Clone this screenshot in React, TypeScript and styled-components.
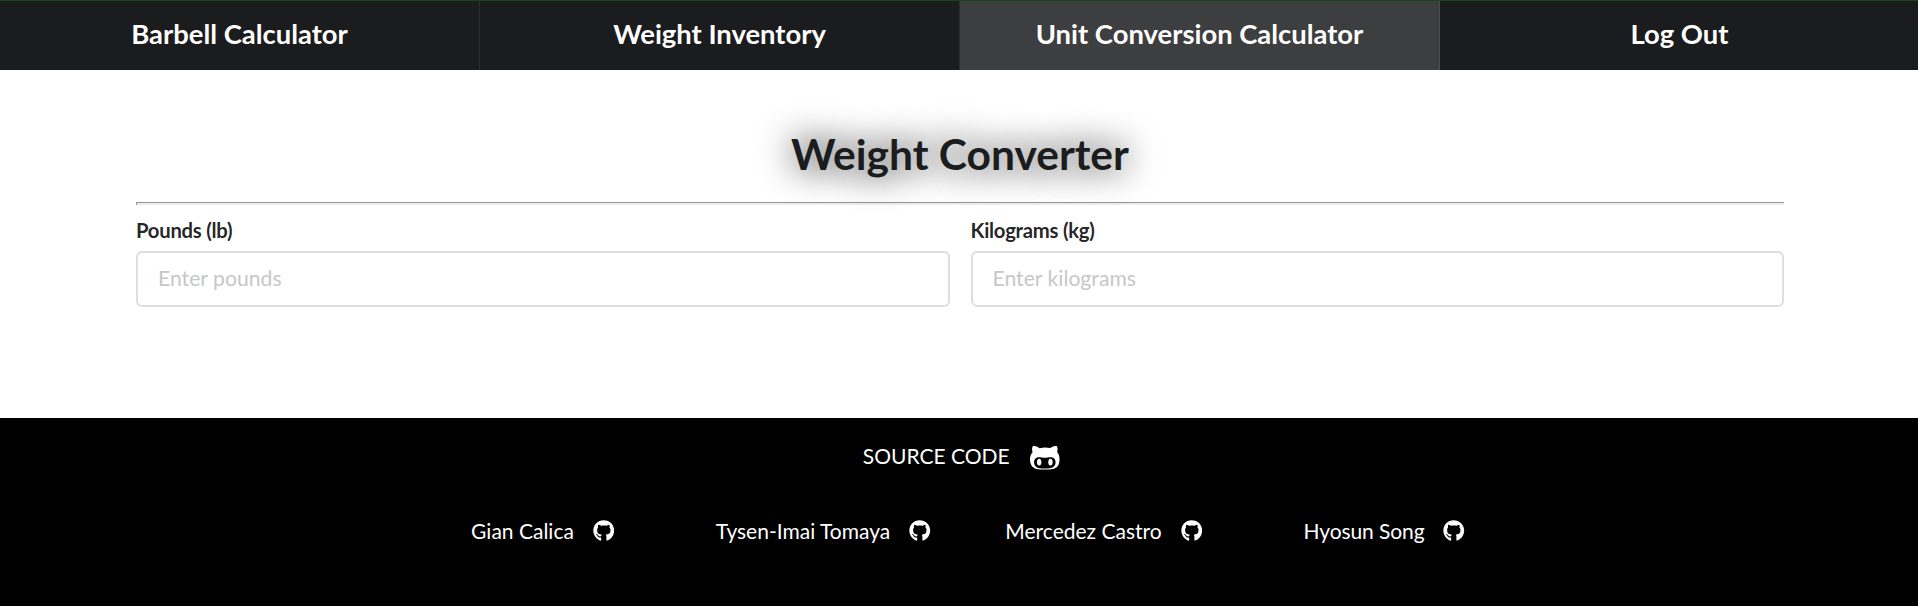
import React from "react";
import styled, { createGlobalStyle } from "styled-components";
import { FaGithub, FaGithubAlt } from "react-icons/fa";

const GlobalStyle = createGlobalStyle`
  *, *::before, *::after { box-sizing: border-box; }
  body { margin: 0; background: #fff; color: rgba(0, 0, 0, 0.87); font-family: Lato, "Liberation Sans", sans-serif; }
`;

const Nav = styled.nav`
  display: grid;
  grid-template-columns: repeat(4, 480px);
  height: 70px;
  overflow: hidden;
  border-top: 1px solid #1c431d;
  background: #1b1c1d;
`;

const NavItem = styled.a<{ $active?: boolean }>`
  display: flex;
  align-items: center;
  justify-content: center;
  padding-bottom: 4px;
  border-right: 1px solid rgba(255, 255, 255, 0.08);
  background: ${(p) => (p.$active ? "#3d3e3f" : "transparent")};
  color: #fff;
  font-size: 27.4px;
  font-weight: 700;
  line-height: 28px;
  &:last-child { border-right-color: transparent; }
`;

const Main = styled.main`
  height: 348px;
  padding: 56px 134px 0 136px;
`;

const Title = styled.h1`
  margin: 0;
  text-align: center;
  color: #1b1c1d;
  font-size: 42.5px;
  font-weight: 700;
  line-height: 56px;
  text-shadow: 0 0 35px #000;
`;

const Rule = styled.hr`
  height: 3px;
  margin: 20px 0 14px;
  border: 0 solid #959595;
  border-top-width: 1px;
  border-left-width: 1px;
  background: #eee;
`;

const Fields = styled.form`
  display: grid;
  grid-template-columns: 1fr 1fr;
  gap: 21px;
`;

const Field = styled.label`
  display: flex;
  flex-direction: column;
  gap: 10px;
  font-size: 20.3px;
  font-weight: 700;
  letter-spacing: -0.25px;
  line-height: 22px;
`;

const Input = styled.input`
  width: 100%;
  height: 56px;
  padding: 0 20px 2px;
  border: 2px solid #dededf;
  border-radius: 6px;
  outline: 0;
  color: inherit;
  font: 400 21.2px Lato, "Liberation Sans", sans-serif;
  &::placeholder { color: #c7c7c7; opacity: 1; }
`;

const Footer = styled.footer`
  display: flex;
  flex-direction: column;
  align-items: center;
  height: 188px;
  padding-top: 23px;
  background: #000;
  color: #fff;
  font-size: 21px;
  line-height: 30px;
`;

const Credit = styled.span`
  display: flex;
  align-items: center;
  justify-content: center;
  gap: 19px;
  white-space: nowrap;
  &:last-child { letter-spacing: -0.1px; }
`;

const SourceLink = styled(Credit)`
  height: 30px;
  margin-left: 5px;
  svg { margin-top: 3px; }
`;

const Credits = styled.div`
  display: grid;
  grid-template-columns: repeat(4, 280.5px);
  margin: 45px 0 0 9px;
`;

const pages = ["Barbell Calculator", "Weight Inventory", "Unit Conversion Calculator", "Log Out"];
const authors = ["Gian Calica", "Tysen-Imai Tomaya", "Mercedez Castro", "Hyosun Song"];

export default function App() {
  return (
    <>
      <GlobalStyle />
      <Nav>
        {pages.map((page) => (
          <NavItem key={page} $active={page === "Unit Conversion Calculator"}>{page}</NavItem>
        ))}
      </Nav>
      <Main>
        <Title>Weight Converter</Title>
        <Rule />
        <Fields>
          <Field>Pounds (lb)<Input placeholder="Enter pounds" /></Field>
          <Field>Kilograms (kg)<Input placeholder="Enter kilograms" /></Field>
        </Fields>
      </Main>
      <Footer>
        <SourceLink>SOURCE CODE<FaGithubAlt size={31.5} /></SourceLink>
        <Credits>
          {authors.map((name) => (
            <Credit key={name}>{name}<FaGithub size={21.5} /></Credit>
          ))}
        </Credits>
      </Footer>
    </>
  );
}
